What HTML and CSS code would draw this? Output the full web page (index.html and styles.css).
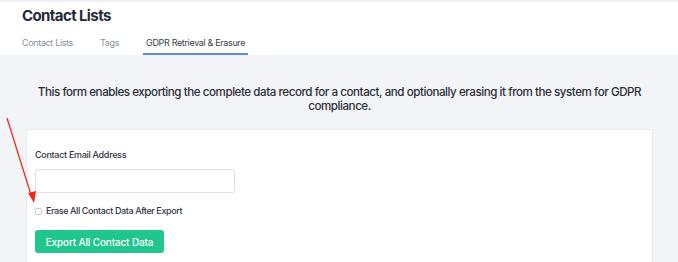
FILE: index.html
```html
<!DOCTYPE html>
<html>
<head>
<meta charset="utf-8">
<link rel="stylesheet" href="styles.css">
</head>
<body>
<header class="top">
  <h1 class="title">Contact Lists</h1>
  <nav class="tabs">
    <a class="tab">Contact Lists</a>
    <a class="tab">Tags</a>
    <a class="tab active">GDPR Retrieval &amp; Erasure</a>
  </nav>
</header>
<main class="main">
  <p class="intro">This form enables exporting the complete data record for a contact, and optionally erasing it from the system for GDPR compliance.</p>
  <section class="card">
    <label class="label">Contact Email Address</label>
    <input class="input" type="text">
    <label class="check"><span class="box"></span>Erase All Contact Data After Export</label>
    <button class="btn">Export All Contact Data</button>
  </section>
  <svg class="arrow" width="40" height="95" viewBox="0 0 40 95">
    <line x1="7" y1="8" x2="32" y2="88" stroke="#f0281e" stroke-width="1.3"/>
    <polygon points="34,93 28,83 36,81" fill="#f0281e"/>
  </svg>
</main>
</body>
</html>
```
FILE: styles.css
```css
* { box-sizing: border-box; }
html, body { margin: 0; padding: 0; }
body {
  width: 678px;
  height: 262px;
  overflow: hidden;
  font-family: Inter, "Noto Sans", sans-serif;
  background: #f3f4f8;
  color: #2c2f3a;
  position: relative;
}
.top {
  background: #fff;
  border-top: 2px solid #eef1f8;
  padding: 4px 0 0 22px;
}
.title {
  margin: 0;
  font-size: 15px;
  font-weight: 700;
  color: #252a3b;
  line-height: 20px;
  letter-spacing: -0.6px;
}
.tabs {
  display: flex;
  margin-top: 11px;
  font-size: 9px;
  line-height: 12px;
  letter-spacing: -0.35px;
}
.tab {
  color: #8a8f9c;
  padding: 0 0 4px;
  border-bottom: 2px solid transparent;
  margin-right: 27px;
}
.tab.active {
  color: #3a3d48;
  border-bottom-color: #5b8fe6;
  padding-left: 3px;
  padding-right: 3px;
  margin-left: -3px;
}
.main {
  padding: 30px 25px 0 26px;
}
.intro {
  margin: 0 0 16px;
  text-align: center;
  font-size: 11.6px;
  font-weight: 500;
  line-height: 14px;
  letter-spacing: -0.45px;
  color: #2b2e38;
}
.card {
  background: #fff;
  border: 1px solid #e8eaf1;
  border-radius: 3px;
  padding: 19px 8px 0 8px;
  height: 140px;
  display: flex;
  flex-direction: column;
  align-items: flex-start;
}
.label {
  font-size: 9px;
  font-weight: 500;
  letter-spacing: -0.3px;
  color: #33363f;
  line-height: 12px;
}
.input {
  margin-top: 8px;
  width: 200px;
  height: 24px;
  border: 1px solid #dfe1e7;
  border-radius: 3px;
  background: #fff;
}
.check {
  display: flex;
  align-items: center;
  margin-top: 12px;
  font-size: 9px;
  font-weight: 500;
  letter-spacing: -0.4px;
  color: #33363f;
  line-height: 12px;
}
.box {
  width: 7px;
  height: 7px;
  border: 1px solid #c9ccd4;
  border-radius: 2px;
  margin-right: 4px;
}
.btn {
  margin-top: 13px;
  height: 23px;
  width: 129px;
  border: 0;
  border-radius: 3px;
  background: #21c68e;
  color: #fff;
  font-family: inherit;
  font-size: 10px;
  font-weight: 500;
  letter-spacing: -0.15px;
  padding: 0;
}
.arrow {
  position: absolute;
  left: 0;
  top: 110px;
}
```
